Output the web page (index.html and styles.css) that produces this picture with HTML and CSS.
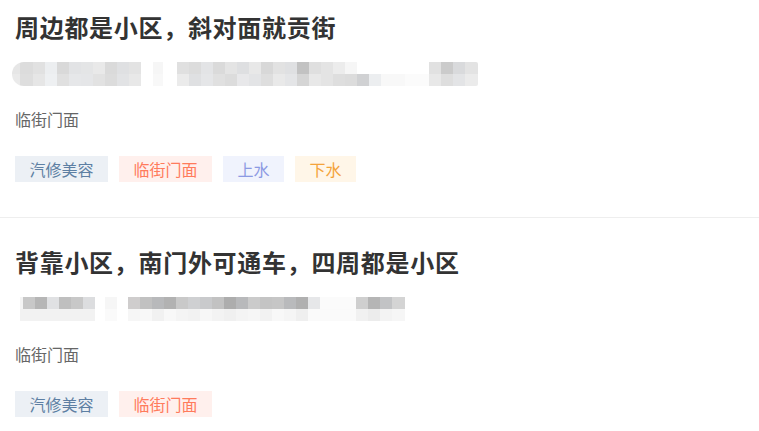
FILE: index.html
```html
<!DOCTYPE html>
<html lang="zh-CN">
<head>
<meta charset="utf-8">
<link rel="stylesheet" href="styles.css">
</head>
<body>
<div class="list">
  <div class="item item-first">
    <h2 class="title">周边都是小区，斜对面就贡街</h2>
    <div class="mosaic mosaic-a"></div>
    <div class="type">临街门面</div>
    <div class="tags">
      <span class="tag tag-blue">汽修美容</span>
      <span class="tag tag-red">临街门面</span>
      <span class="tag tag-purple">上水</span>
      <span class="tag tag-orange">下水</span>
    </div>
  </div>
  <div class="item">
    <h2 class="title">背靠小区，南门外可通车，四周都是小区</h2>
    <div class="mosaic mosaic-b"></div>
    <div class="type">临街门面</div>
    <div class="tags">
      <span class="tag tag-blue">汽修美容</span>
      <span class="tag tag-red">临街门面</span>
    </div>
  </div>
</div>
</body>
</html>
```
FILE: styles.css
```css
* { box-sizing: border-box; }
html, body { margin: 0; padding: 0; background: #fff; }
body {
  font-family: "Noto Sans CJK SC", "Noto Sans", "Liberation Sans", sans-serif;
  overflow: hidden;
  height: 431px;
}
.item {
  padding: 27px 15px 35px 15px;
  border-bottom: 1px solid #eeeeee;
}
.item-first { padding-top: 10px; }
.title {
  margin: 0;
  font-size: 24px;
  line-height: 34px;
  font-weight: 700;
  letter-spacing: 0.7px;
  color: #333333;
}
.mosaic {
  margin-top: 18px;
  height: 24px;
}
.mosaic-a {
  width: 466px;
  margin-left: -3px;
  border-radius: 12px 2px 2px 12px;
  background:
    linear-gradient(to right,
      #e6e6e6 0 8px, #dcdcdc 8px 21px, #e1e1e1 21px 33px, #eceef0 33px 45px,
      #d9d9d9 45px 57px, #e2e3e5 57px 69px, #e4e5e6 69px 81px, #e9e9e9 81px 93px,
      #dadada 93px 105px, #dfe0e2 105px 117px, #e3e3e3 117px 129px,
      #ffffff 129px 141px, #f6f6f6 141px 151px, #ffffff 151px 165px,
      #e0e0e0 165px 177px, #dcdcdc 177px 189px, #e3e4e6 189px 201px, #dadada 201px 213px,
      #e4e4e4 213px 225px, #dedfe1 225px 237px, #e8e8e8 237px 249px, #d8d8d8 249px 261px,
      #e2e2e2 261px 273px, #dfe0e2 273px 285px, #c2c2c2 285px 297px, #dfdfdf 297px 309px,
      #e4e4e4 309px 321px, #ececec 321px 333px, #f6f6f6 333px 345px, #ffffff 345px 417px,
      #e1e1e1 417px 429px, #cbcbcb 429px 441px, #d9dadc 441px 453px, #e3e3e3 453px 466px)
      top left / 100% 12px no-repeat,
    linear-gradient(to right,
      #eaeaea 0 8px, #dedede 8px 21px, #e6e6e6 21px 33px, #eef0f2 33px 45px,
      #e0e0e0 45px 57px, #e6e7e9 57px 69px, #e5e6e8 69px 81px, #e2e2e2 81px 93px,
      #dcdcdc 93px 105px, #e2e3e5 105px 117px, #e8e8e8 117px 129px,
      #ffffff 129px 141px, #f8f8f8 141px 151px, #ffffff 151px 165px,
      #ebebeb 165px 177px, #dfe0e2 177px 189px, #e5e6e8 189px 201px, #e0e0e0 201px 213px,
      #dcdcdc 213px 225px, #e8e8ea 225px 237px, #e3e4e6 237px 249px, #dedede 249px 261px,
      #e9e9e9 261px 273px, #e4e5e7 273px 285px, #d5d5d5 285px 297px, #e8e8e8 297px 309px,
      #e4e4e4 309px 321px, #dedede 321px 333px, #dcdcdc 333px 345px, #d0d1d3 345px 357px,
      #eceef0 357px 369px, #f8f8f8 369px 393px, #fbfbfb 393px 417px,
      #e8e8e8 417px 429px, #dedede 429px 441px, #e3e4e6 441px 453px, #ebebeb 453px 466px)
      bottom left / 100% 12px no-repeat;
}
.mosaic-b {
  width: 390px;
  background:
    linear-gradient(to right,
      #ffffff 0 5px, #f4f4f4 5px 8px, #c8c8c8 8px 20px, #b6b6b6 20px 32px,
      #e0e1e3 32px 44px, #bfbfbf 44px 56px, #c8c8c8 56px 68px, #dcdddf 68px 80px,
      #ffffff 80px 90px, #f6f6f6 90px 102px, #ffffff 102px 113px,
      #cfcdcd 113px 125px, #c1c1c1 125px 137px, #b8b9bb 137px 149px, #b2b2b2 149px 161px,
      #c9c9c9 161px 173px, #cfd0d2 173px 185px, #c9cacc 185px 197px, #c2c2c2 197px 209px,
      #adadad 209px 221px, #b8b9bb 221px 233px, #cbcbcb 233px 245px, #c4c4c4 245px 257px,
      #c6c6c6 257px 269px, #b9babc 269px 281px, #b0b0b0 281px 293px, #e6e7e9 293px 305px,
      #fbfbfb 305px 341px, #cfcfcf 341px 353px, #b5b5b5 353px 365px, #c2c3c5 365px 377px,
      #d4d4d4 377px 390px)
      top left / 100% 12px no-repeat,
    linear-gradient(to right,
      #ffffff 0 5px, #f2f2f2 5px 80px, #ffffff 80px 90px, #fafafa 90px 102px, #ffffff 102px 113px,
      #f6f6f6 113px 125px, #f8f8f8 125px 137px, #f1f1f1 137px 149px, #f8f8f8 149px 161px,
      #f4f4f4 161px 173px, #f2f2f2 173px 185px, #f7f7f7 185px 197px, #f3f3f3 197px 209px,
      #f0f0f0 209px 221px, #f4f4f4 221px 233px, #f6f6f6 233px 245px, #f2f2f2 245px 257px,
      #f8f8f8 257px 269px, #f5f5f5 269px 281px, #efefef 281px 293px, #fafafa 293px 341px,
      #f1f1f1 341px 353px, #ececec 353px 365px, #f3f3f3 365px 377px, #f6f6f6 377px 390px)
      bottom left / 100% 12px no-repeat;
}
.type {
  margin-top: 21px;
  font-size: 16px;
  line-height: 24px;
  color: #666666;
}
.tags {
  margin-top: 25px;
  display: flex;
  gap: 11px;
}
.tag {
  display: inline-block;
  height: 26px;
  line-height: 26px;
  padding: 0 14.5px;
  font-size: 16px;
}
.tag-blue { background: #ecf0f5; color: #5d7fa3; }
.tag-red { background: #fff0ed; color: #ff7b5c; }
.tag-purple { background: #f0f3fd; color: #8c9ae3; }
.tag-orange { background: #fff6e8; color: #f4a33a; }
```
